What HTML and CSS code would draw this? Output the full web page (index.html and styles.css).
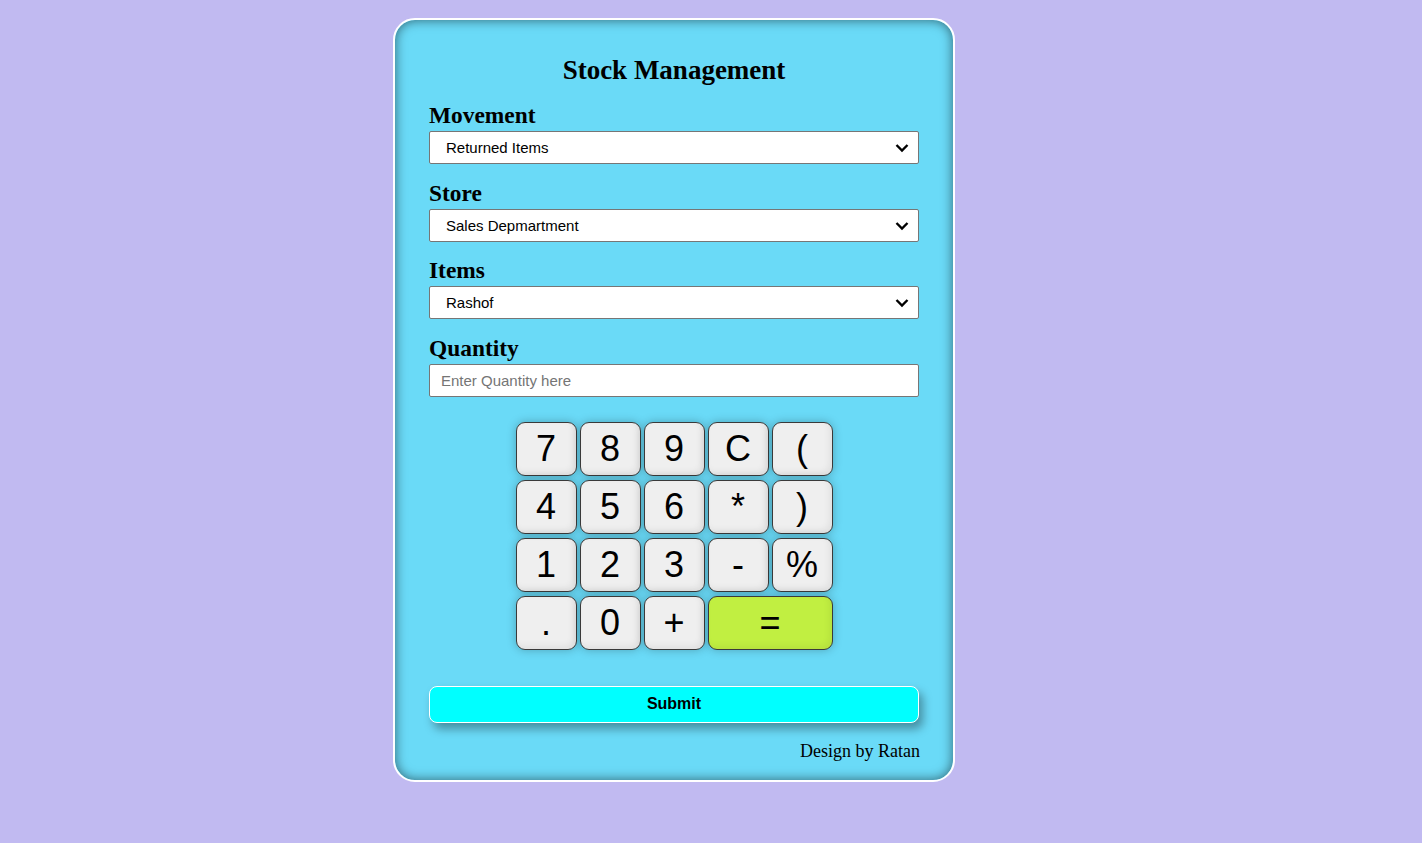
FILE: index.html
```html
<!DOCTYPE html>
<html>
<head>
<meta charset="utf-8">
<link rel="stylesheet" href="styles.css">
</head>
<body>
<div class="card">
  <h2 class="title">Stock Management</h2>
  <div class="field">
    <label class="label">Movement</label>
    <div class="select-wrap">
      <select class="select"><option>Returned Items</option></select>
      <svg class="chev" viewBox="0 0 14 10" width="14" height="10"><path d="M1.5 2 L7 7.5 L12.5 2" fill="none" stroke="#000" stroke-width="2.4"/></svg>
    </div>
  </div>
  <div class="field">
    <label class="label">Store</label>
    <div class="select-wrap">
      <select class="select"><option>Sales Depmartment</option></select>
      <svg class="chev" viewBox="0 0 14 10" width="14" height="10"><path d="M1.5 2 L7 7.5 L12.5 2" fill="none" stroke="#000" stroke-width="2.4"/></svg>
    </div>
  </div>
  <div class="field">
    <label class="label">Items</label>
    <div class="select-wrap">
      <select class="select"><option>Rashof</option></select>
      <svg class="chev" viewBox="0 0 14 10" width="14" height="10"><path d="M1.5 2 L7 7.5 L12.5 2" fill="none" stroke="#000" stroke-width="2.4"/></svg>
    </div>
  </div>
  <div class="field">
    <label class="label">Quantity</label>
    <input class="input" type="text" placeholder="Enter Quantity here">
  </div>
  <div class="keypad">
    <button class="key">7</button>
    <button class="key">8</button>
    <button class="key">9</button>
    <button class="key">C</button>
    <button class="key">(</button>
    <button class="key">4</button>
    <button class="key">5</button>
    <button class="key">6</button>
    <button class="key">*</button>
    <button class="key">)</button>
    <button class="key">1</button>
    <button class="key">2</button>
    <button class="key">3</button>
    <button class="key">-</button>
    <button class="key">%</button>
    <button class="key">.</button>
    <button class="key">0</button>
    <button class="key">+</button>
    <button class="key key-eq">=</button>
  </div>
  <button class="submit">Submit</button>
  <div class="credit">Design by Ratan</div>
</div>
</body>
</html>
```

FILE: styles.css
```css
html, body {
  margin: 0;
  padding: 0;
}
body {
  background: #c1baf1;
  font-family: "Liberation Serif", "Times New Roman", serif;
  min-height: 843px;
}
.card {
  box-sizing: border-box;
  width: 562px;
  margin: 18px 0 0 393px;
  height: 764px;
  background: #6adaf7;
  border: 2px solid #ffffff;
  border-radius: 22px;
  box-shadow: inset 0 0 12px rgba(0, 0, 0, 0.55);
  padding: 35px 34px 0;
  display: flex;
  flex-direction: column;
}
.title {
  margin: 0;
  text-align: center;
  font-size: 27px;
  line-height: 30px;
  font-weight: bold;
  color: #000;
}
.field {
  display: flex;
  flex-direction: column;
}
.field + .field {
  margin-top: 16.6px;
}
.title + .field {
  margin-top: 18px;
}
.label {
  font-size: 23.4px;
  font-weight: bold;
  line-height: 25px;
  margin-bottom: 3px;
}
.select-wrap {
  position: relative;
}
.select {
  appearance: none;
  -webkit-appearance: none;
  width: 100%;
  height: 33px;
  box-sizing: border-box;
  border: 1px solid #767676;
  border-radius: 2px;
  background: #fff;
  font-family: "Liberation Sans", Arial, sans-serif;
  font-size: 15px;
  color: #000;
  padding: 0 0 0 16px;
  margin: 0;
  outline: none;
}
.chev {
  position: absolute;
  right: 10px;
  top: 12px;
  pointer-events: none;
}
.input {
  width: 100%;
  height: 33px;
  box-sizing: border-box;
  border: 1px solid #767676;
  border-radius: 2px;
  background: #fff;
  font-family: "Liberation Sans", Arial, sans-serif;
  font-size: 15px;
  padding: 0 11px;
  margin: 0;
  outline: none;
}
.input::placeholder {
  color: #757575;
}
.keypad {
  align-self: center;
  margin-top: 25px;
  display: grid;
  grid-template-columns: repeat(5, 61px);
  grid-auto-rows: 54px;
  column-gap: 3px;
  row-gap: 4px;
}
.key {
  margin: 0;
  padding: 0;
  box-sizing: border-box;
  border: 1px solid #3a3a3a;
  border-radius: 9px;
  background: #efefef;
  font-family: "Liberation Sans", Arial, sans-serif;
  font-size: 36px;
  color: #000;
  box-shadow: 0 0 10px rgba(0, 0, 0, 0.25), inset -3px -3px 6px rgba(0, 0, 0, 0.06);
}
.key-eq {
  grid-column: span 2;
  background: #c1ef41;
}
.submit {
  margin: 36px 0 0;
  height: 37px;
  width: 100%;
  box-sizing: border-box;
  background: #00ffff;
  border: 1px solid #ffffff;
  border-radius: 8px;
  font-family: "Liberation Sans", Arial, sans-serif;
  font-weight: bold;
  font-size: 16px;
  color: #000;
  box-shadow: 4px 6px 10px rgba(0, 0, 0, 0.35);
}
.credit {
  margin-top: 17px;
  text-align: right;
  font-size: 18px;
  line-height: 22px;
  margin-right: -1px;
}
```
